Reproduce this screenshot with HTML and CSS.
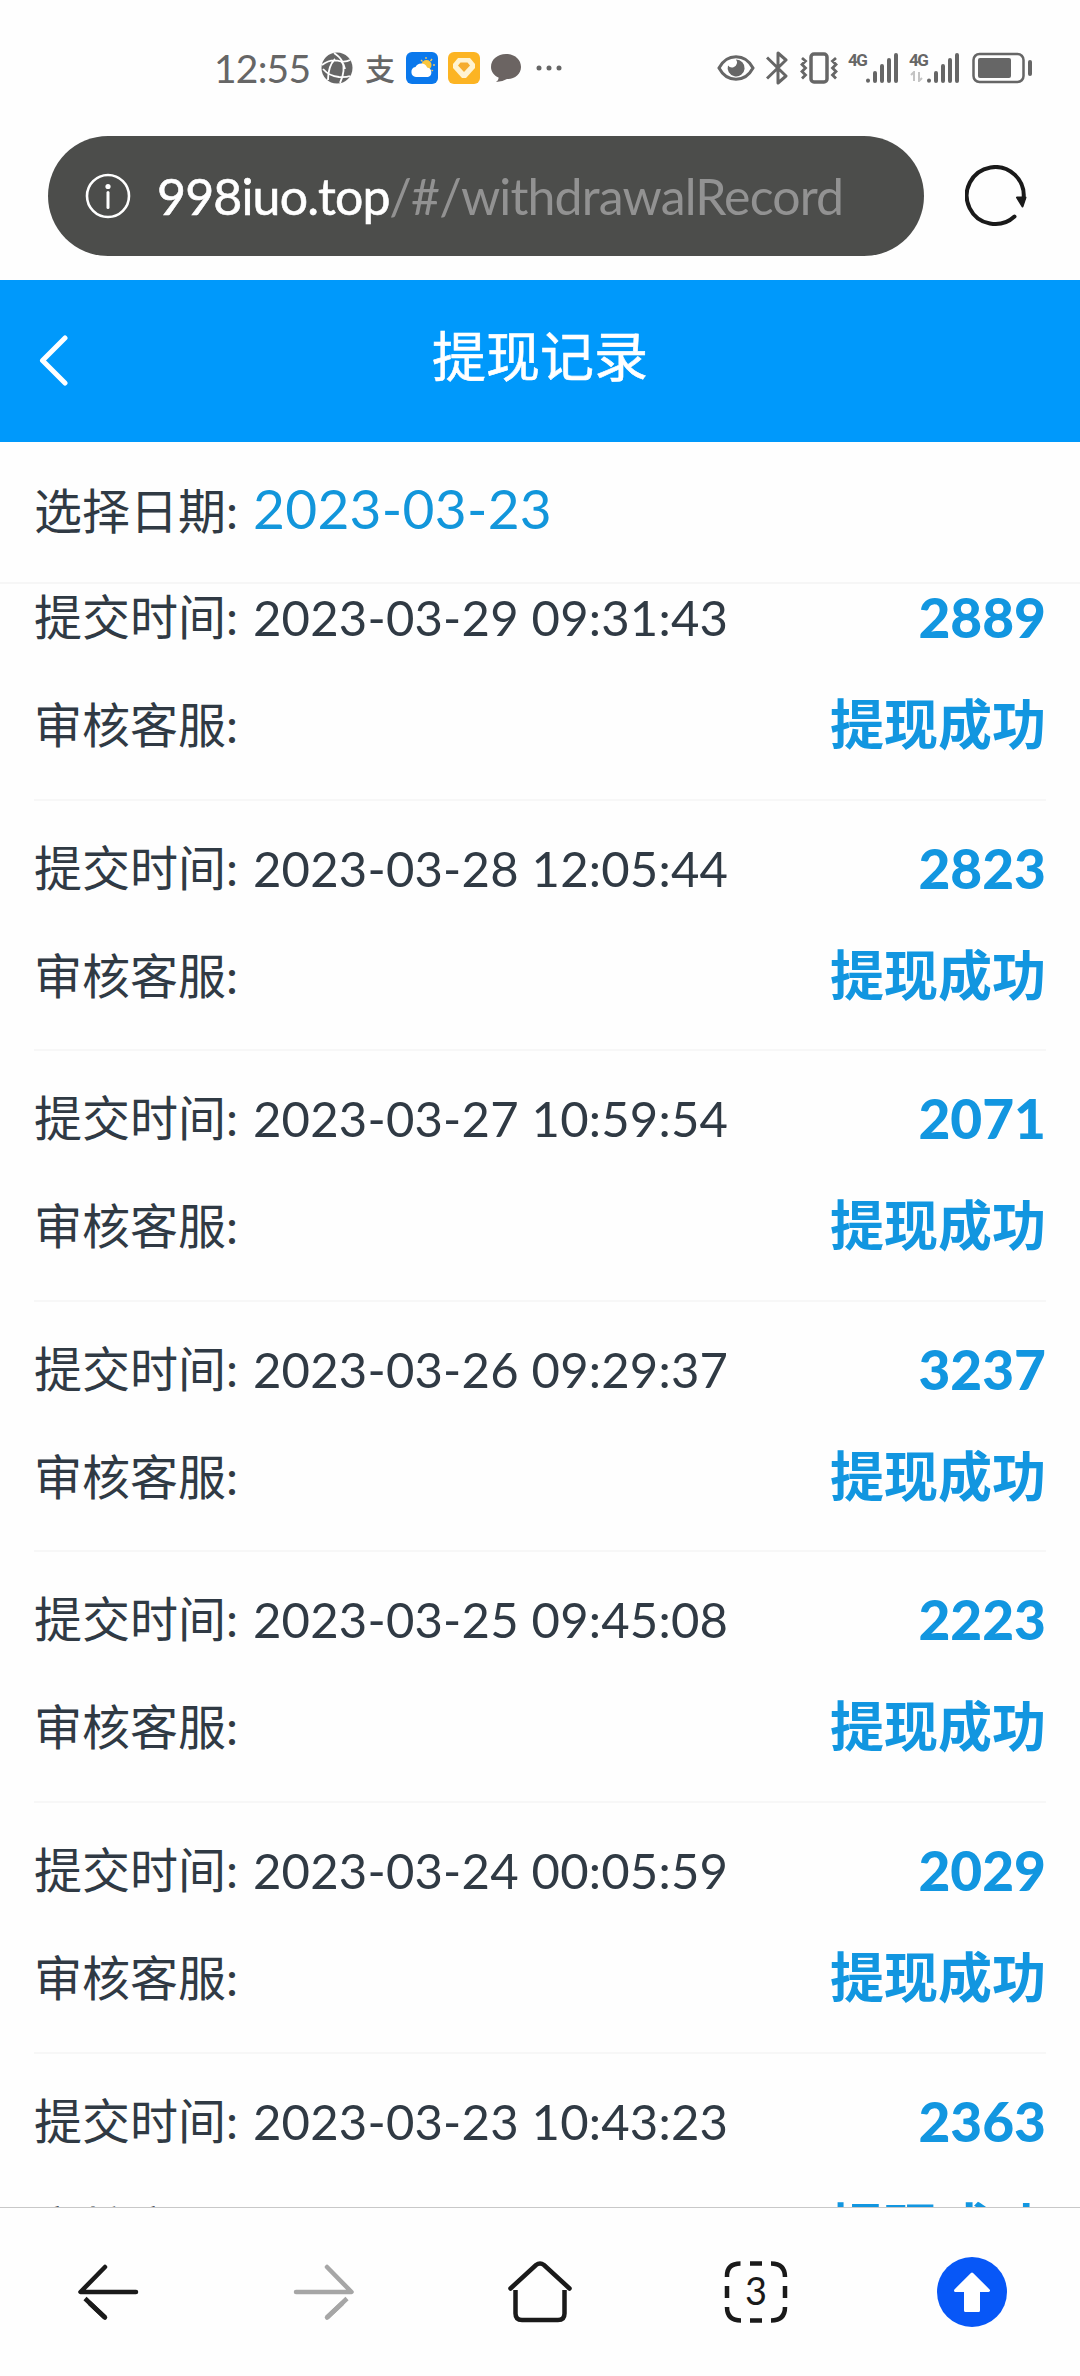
FILE: index.html
```html
<!DOCTYPE html>
<html lang="zh-CN">
<head>
    <meta charset="UTF-8">
    <meta name="viewport" content="width=device-width, initial-scale=1.0">
    <title>提现记录</title>
    <link rel="stylesheet" href="styles.css">
</head>
<body>
    <div class="status-bar">
        <div class="status-left">
            <span class="clock">12:55</span>
            <!-- browser ball -->
            <svg class="ball" width="32" height="32" viewBox="0 0 32 32" fill="none" aria-hidden="true">
                <circle cx="16" cy="16" r="15.5" fill="#666"/>
                <path d="M13 1Q19 5 21 9Q25 18 19 31M1 13Q10 6 20 9.500Q26 10 29 8M2 17Q8 24 18 25Q25 25.500 29 24M14 7Q7 14 7 28M20 9Q23 12 24 17" stroke="#fff" stroke-width="1.800"/>
            </svg>
            <span class="pay-mark">支</span>
            <!-- weather -->
            <svg class="weather" width="32" height="32" viewBox="0 0 32 32" aria-hidden="true">
                <rect width="32" height="32" rx="6" fill="#0a78ec"/>
                <path d="M20 5v2M26 7l-1.500 2M29 13h-2M15 8l1.500 1.500M27 19l-1.500-1" stroke="#f8c860" stroke-width="1.300"/>
                <circle cx="20.500" cy="13" r="5" fill="#fac63c"/>
                <path d="M10 25a5 5 0 0 1-.5-9.900 6.300 6.300 0 0 1 11.600.4A4.900 4.900 0 0 1 22 25z" fill="#fff"/>
            </svg>
            <!-- wallet gem -->
            <svg class="gem" width="32" height="32" viewBox="0 0 32 32" aria-hidden="true">
                <rect width="32" height="32" rx="6" fill="#fcb423"/>
                <path d="M10 6h12l5 6v4L18 26h-4L5 16v-4z" fill="#fff3d2"/>
                <path d="M12.500 10.500h7l2.500 3-6 6.500-6-6.500z" fill="#f5ac2e"/>
            </svg>
            <svg class="bubble" width="32" height="32" viewBox="0 0 32 32" aria-hidden="true">
                <path d="M16 2C24.500 2 31 7.500 31 15S24.500 27 17 27Q12 30 6 30Q9 28 8.500 25.500C4 23.500 1 19.500 1 15 1 7.500 7.500 2 16 2z" fill="#6b6462"/>
            </svg>
            <svg width="26" height="6" viewBox="0 0 26 6" fill="#666" aria-hidden="true">
                <circle cx="3" cy="3" r="2.500"/><circle cx="13" cy="3" r="2.500"/><circle cx="23" cy="3" r="2.500"/>
            </svg>
        </div>
        <div class="status-right">
            <svg class="eye" width="38" height="28" viewBox="0 0 38 28" fill="none" aria-hidden="true">
                <path d="M2 14C10-1 28-1 36 14C28 29 10 29 2 14z" stroke="#666" stroke-width="3"/>
                <path d="M19 5.500A8.500 8.500 0 1 1 11 11.500A5 5 0 0 0 17 13A5 5 0 0 0 19 5.500z" fill="#666"/>
            </svg>
            <svg class="bluetooth" width="22" height="34" viewBox="0 0 22 34" fill="none" aria-hidden="true">
                <path d="M1 6.500L20 25L12 32V2L20 9L1 27.500" stroke="#666" stroke-width="3" stroke-linejoin="round"/>
            </svg>
            <svg class="vibrate" width="38" height="32" viewBox="0 0 38 32" fill="none" stroke="#666" aria-hidden="true">
                <rect x="11" y="2" width="16" height="28" rx="3" stroke-width="3.500"/>
                <path d="M2 6l3.500 3-3.500 3.500 3.500 3.500-3.500 3.500 3.500 3.500-3.500 3.500M36 6l-3.500 3 3.500 3.500-3.500 3.500 3.500 3.500-3.500 3.500 3.500 3.500" stroke-width="2.800"/>
            </svg>
            <div class="signal">
                <span class="net">4G</span>
                <svg width="34" height="32" viewBox="0 0 34 32" stroke="#666" stroke-width="4" stroke-linecap="round" aria-hidden="true">
                    <path d="M3 28.500v.2M10 21v8M17 14v15M24 8v21M31 3v26"/>
                </svg>
            </div>
            <div class="signal">
                <span class="net">4G</span>
                <svg class="data" width="14" height="11" viewBox="0 0 14 11" fill="none" stroke="#c4c4c4" stroke-width="2" aria-hidden="true">
                    <path d="M1 4l3-3v9M9 1v9l3-3"/>
                </svg>
                <svg width="34" height="32" viewBox="0 0 34 32" stroke="#666" stroke-width="4" stroke-linecap="round" aria-hidden="true">
                    <path d="M3 28.500v.2M10 21v8M17 14v15M24 8v21M31 3v26"/>
                </svg>
            </div>
            <svg class="battery" width="60" height="32" viewBox="0 0 60 32" aria-hidden="true">
                <rect x="1.500" y="2" width="50" height="28" rx="6" fill="none" stroke="#666" stroke-width="2.500"/>
                <rect x="6" y="6" width="33" height="20" rx="2" fill="#666"/>
                <rect x="56" y="8" width="4" height="16" rx="2" fill="#666"/>
            </svg>
        </div>
    </div>

    <div class="address-bar">
        <div class="url">
            <svg width="46" height="46" viewBox="0 0 46 46" fill="none" aria-hidden="true">
                <circle cx="23" cy="23" r="21" stroke="#fff" stroke-width="2.600"/>
                <circle cx="23" cy="13.500" r="2.600" fill="#fff"/>
                <path d="M23 19.500v15" stroke="#fff" stroke-width="3" stroke-linecap="round"/>
            </svg>
            <span class="url-text"><span class="host">998iuo.top</span><span class="path">/#/withdrawalRecord</span></span>
        </div>
        <svg class="reload" width="62" height="62" viewBox="0 0 62 62" fill="none" aria-hidden="true">
            <path d="M49.500 51.500A28.500 28.500 0 1 1 58.500 34" stroke="#1a1a1a" stroke-width="4" stroke-linecap="round"/>
            <path d="M52 32.500h8.500L57.500 41.500z" fill="#1a1a1a" stroke="#1a1a1a" stroke-width="2" stroke-linejoin="round"/>
        </svg>
    </div>

    <header class="page-header">
        <svg class="back" width="30" height="52" viewBox="0 0 30 52" fill="none" aria-hidden="true">
            <path d="M27 3L4.500 25.500L27 48" stroke="#fff" stroke-width="5" stroke-linecap="round" stroke-linejoin="round"/>
        </svg>
        <h1 class="page-title">提现记录</h1>
    </header>

    <div class="date-filter">
        <span class="label">选择日期:</span>
        <span class="date">2023-03-23</span>
    </div>

    <main class="records">
        <div class="record">
            <div class="row"><span class="label">提交时间:</span><span class="time">2023-03-29 09:31:43</span><span class="amount">2889</span></div>
            <div class="row"><span class="label">审核客服:</span><span class="result">提现成功</span></div>
        </div>
        <div class="record">
            <div class="row"><span class="label">提交时间:</span><span class="time">2023-03-28 12:05:44</span><span class="amount">2823</span></div>
            <div class="row"><span class="label">审核客服:</span><span class="result">提现成功</span></div>
        </div>
        <div class="record">
            <div class="row"><span class="label">提交时间:</span><span class="time">2023-03-27 10:59:54</span><span class="amount">2071</span></div>
            <div class="row"><span class="label">审核客服:</span><span class="result">提现成功</span></div>
        </div>
        <div class="record">
            <div class="row"><span class="label">提交时间:</span><span class="time">2023-03-26 09:29:37</span><span class="amount">3237</span></div>
            <div class="row"><span class="label">审核客服:</span><span class="result">提现成功</span></div>
        </div>
        <div class="record">
            <div class="row"><span class="label">提交时间:</span><span class="time">2023-03-25 09:45:08</span><span class="amount">2223</span></div>
            <div class="row"><span class="label">审核客服:</span><span class="result">提现成功</span></div>
        </div>
        <div class="record">
            <div class="row"><span class="label">提交时间:</span><span class="time">2023-03-24 00:05:59</span><span class="amount">2029</span></div>
            <div class="row"><span class="label">审核客服:</span><span class="result">提现成功</span></div>
        </div>
        <div class="record">
            <div class="row"><span class="label">提交时间:</span><span class="time">2023-03-23 10:43:23</span><span class="amount">2363</span></div>
            <div class="row"><span class="label">审核客服:</span><span class="result">提现成功</span></div>
        </div>
    </main>

    <nav class="toolbar">
        <svg width="64" height="64" viewBox="0 0 64 64" fill="none" stroke="#1a1a1a" stroke-width="4.500" stroke-linecap="round" stroke-linejoin="round" aria-hidden="true">
            <path d="M29 7L4.500 32H60"/>
            <path d="M9 38.500L29 57.500" stroke-linecap="butt"/>
            <path d="M14 43.500L29 57.500"/>
        </svg>
        <svg width="64" height="64" viewBox="0 0 64 64" fill="none" stroke="#a6a6a6" stroke-width="4.500" stroke-linecap="round" stroke-linejoin="round" aria-hidden="true">
            <path d="M35 7L59.500 32H4"/>
            <path d="M55 38.500L35 57.500" stroke-linecap="butt"/>
            <path d="M50 43.500L35 57.500"/>
        </svg>
        <svg width="64" height="64" viewBox="0 0 64 64" fill="none" stroke="#1a1a1a" stroke-width="4.500" aria-hidden="true">
            <path d="M2.500 28.500L28 5Q32 2 36 5L61.500 28.500" stroke-linecap="round"/>
            <path d="M7.500 30V53.500Q7.500 60 14 60H50Q56.500 60 56.500 53.500V30"/>
        </svg>
        <div class="tabs">
            <svg width="64" height="64" viewBox="0 0 64 64" fill="none" stroke="#1a1a1a" stroke-width="4.500" aria-hidden="true">
                <path d="M3 17V16Q3 3.500 16.500 3.500M26 3.500h12M47 3.500Q61 3.500 61 17M61 26v12M61 47Q61 60.500 47 60.500M38 60.500H26M17 60.500Q3 60.500 3 47M3 38V26"/>
            </svg>
            <span class="tabs-count">3</span>
        </div>
        <svg width="70" height="70" viewBox="0 0 70 70" aria-hidden="true">
            <circle cx="35" cy="35" r="35" fill="#0757f7"/>
            <path d="M35 17L51.500 33.500H41.500V53.500H28.500V33.500H18.500z" fill="#fff" stroke="#fff" stroke-width="3" stroke-linejoin="round"/>
        </svg>
    </nav>
</body>
</html>
```
FILE: styles.css
```css
* {
    box-sizing: border-box;
}
body {
    margin: 0;
    width: 1080px;
    height: 2376px;
    display: flex;
    flex-direction: column;
    overflow: hidden;
    background: #fefefe;
    color: #303a44;
    font-family: Lato, 'Noto Sans CJK SC', sans-serif;
    font-size: 48px;
}
svg {
    display: block;
    flex-shrink: 0;
}

/* phone status bar */
.status-bar {
    height: 136px;
    padding: 0 48px 0 214px;
    display: flex;
    justify-content: space-between;
    align-items: center;
    color: #666;
}
.status-left,
.status-right {
    display: flex;
    align-items: center;
}
.clock {
    width: 107px;
    font-size: 39px;
    line-height: 40px;
    letter-spacing: -0.8px;
}
.pay-mark {
    width: 32px;
    margin: 0 9px 0 12px;
    font-size: 30px;
    font-weight: 500;
    line-height: 32px;
}
.gem {
    margin: 0 10px;
}
.bubble {
    margin-right: 14px;
}
.bluetooth {
    margin: 0 12px 0 11px;
}
.signal {
    display: flex;
    align-items: flex-start;
    margin-left: 10px;
    height: 32px;
    position: relative;
}
.net {
    width: 17px;
    font: bold 17px/16px Roboto, sans-serif;
    letter-spacing: -1.5px;
}
.data {
    position: absolute;
    left: 1px;
    bottom: 2px;
}
.battery {
    margin-left: 12px;
}

/* browser address bar */
.address-bar {
    height: 144px;
    padding-left: 48px;
    display: flex;
    align-items: flex-start;
}
.url {
    width: 876px;
    height: 120px;
    padding-left: 37px;
    display: flex;
    align-items: center;
    gap: 26px;
    border-radius: 60px;
    background: #4c4d4b;
}
.url-text {
    font-size: 50px;
    line-height: 60px;
    letter-spacing: -0.85px;
    white-space: nowrap;
}
.host {
    color: #fff;
    -webkit-text-stroke: 0.6px #fff;
}
.path {
    color: #929292;
}
.reload {
    margin: 29px 0 0 41px;
}

/* page header */
.page-header {
    height: 162px;
    padding: 0 38px;
    display: flex;
    align-items: center;
    background: #0099fb;
    color: #fff;
}
.page-title {
    flex: 1;
    margin: 0 30px 8px 0;
    font-size: 54px;
    font-weight: 400;
    line-height: 60px;
    text-align: center;
    -webkit-text-stroke: 0.6px #fff;
}

.date-filter {
    height: 142px;
    padding: 0 34px 8px;
    display: flex;
    align-items: center;
    border-bottom: 2px solid #f6f6f6;
}
.label {
    width: 219px;
}
.date {
    color: #1296db;
    font-size: 55px;
    letter-spacing: 0.3px;
}
.time {
    font-size: 49px;
    letter-spacing: 0.2px;
}

/* records list, scrolled by part of the first card */
.records {
    height: 1623px;
    overflow: hidden;
}
.record {
    height: 250.6px;
    margin: 0 34px;
    padding-top: 13px;
    border-bottom: 2px solid #f7f7f7;
}
.record:first-child {
    margin-top: -34px;
}
.row {
    height: 108px;
    display: flex;
    align-items: center;
    line-height: 108px;
}
.amount,
.result {
    margin-left: auto;
    color: #1296e0;
    font-size: 54px;
    font-weight: 700;
}
.amount {
    font-size: 55px;
    font-weight: 900;
}

/* browser bottom toolbar */
.toolbar {
    flex: 1;
    display: grid;
    grid-template-columns: repeat(5, 1fr);
    place-items: center;
    border-top: 1px solid #c8c8c8;
}
.tabs {
    position: relative;
}
.tabs-count {
    position: absolute;
    inset: 0;
    color: #1a1a1a;
    font-size: 38px;
    line-height: 60px;
    text-align: center;
}
```
